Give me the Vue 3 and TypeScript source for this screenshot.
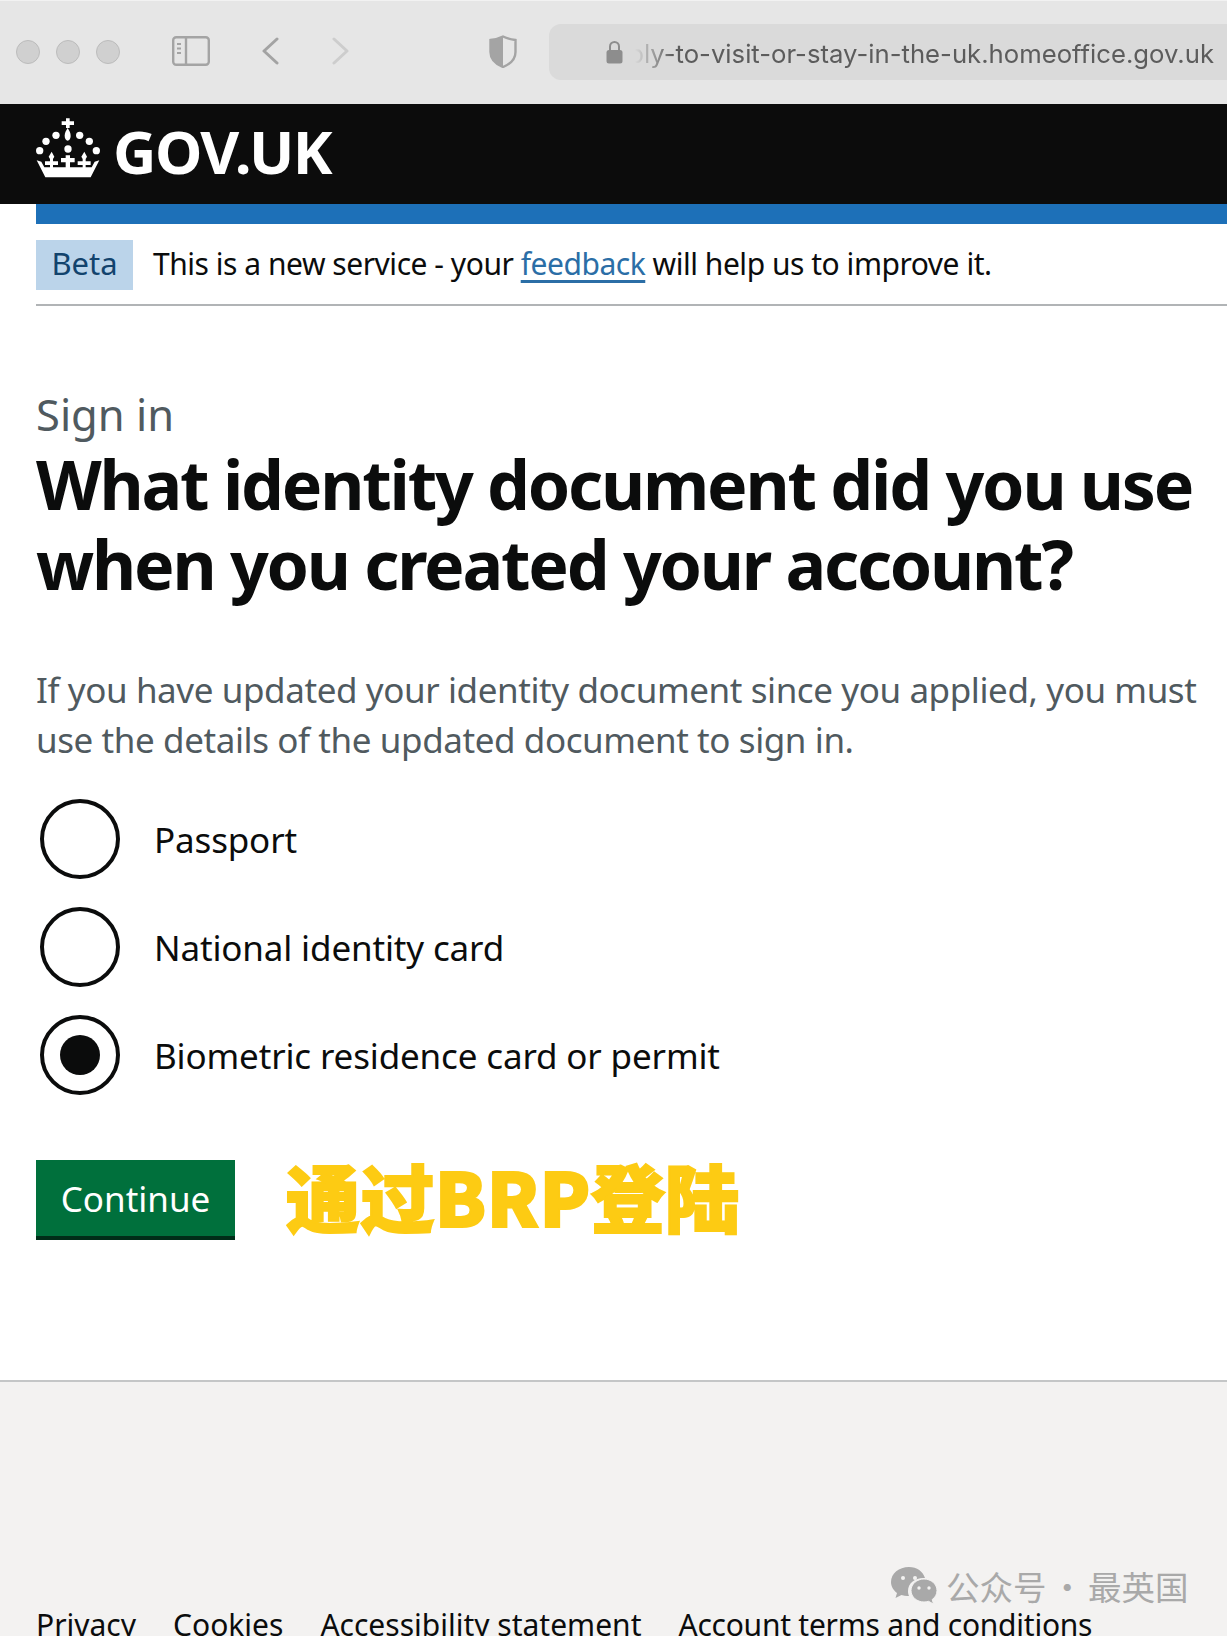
<script setup lang="ts">
const radios = [
  { label: 'Passport', checked: false },
  { label: 'National identity card', checked: false },
  { label: 'Biometric residence card or permit', checked: true },
]
const links = ['Privacy', 'Cookies', 'Accessibility statement', 'Account terms and conditions']
</script>

<template>
  <div class="page">
    <div class="toolbar">
      <div class="dots"><span class="dot"></span><span class="dot"></span><span class="dot"></span></div>
      <svg class="sidebar" width="38" height="30" viewBox="0 0 38 30">
        <rect x="1.2" y="1.2" width="35.6" height="27.6" rx="3" fill="none" stroke="#a4a4a4" stroke-width="2.4" />
        <path d="M14 1v28" stroke="#a4a4a4" stroke-width="2.4" />
        <path d="M5 8h4M5 12.500h4M5 17h4" stroke="#a4a4a4" stroke-width="1.800" />
      </svg>
      <svg class="back" width="18" height="28" viewBox="0 0 18 28"><path d="M16 2 3 14l13 12" fill="none" stroke="#a3a3a3" stroke-width="3" stroke-linecap="round" stroke-linejoin="round" /></svg>
      <svg class="forward" width="18" height="28" viewBox="0 0 18 28"><path d="M2 2l13 12L2 26" fill="none" stroke="#cdcdcd" stroke-width="3" stroke-linecap="round" stroke-linejoin="round" /></svg>
      <svg class="shield" width="28" height="33" viewBox="0 0 28 33">
        <path d="M14 1.500C10 3.500 6 4.500 1.500 5v12c0 7 5 12 12.500 15 7.500-3 12.500-8 12.500-15V5C22 4.500 18 3.500 14 1.500Z" fill="none" stroke="#a4a4a4" stroke-width="2.400" />
        <path d="M14 1.500C10 3.500 6 4.500 1.500 5v12c0 7 5 12 12.500 15Z" fill="#a4a4a4" />
      </svg>
      <div class="urlbar">
        <svg class="lock" width="17" height="24" viewBox="0 0 17 24">
          <path d="M4 11V6.500a4.500 4.500 0 0 1 9 0V11" fill="none" stroke="#8d8d8d" stroke-width="2" />
          <rect x="0.500" y="10" width="16" height="13.500" rx="2.500" fill="#8d8d8d" />
        </svg>
        <div class="url"><span>apply-to-visit-or-stay-in-the-uk.homeoffice.gov.uk</span></div>
      </div>
    </div>

    <header class="govhead">
      <svg class="crown" width="64" height="60" viewBox="48 54 192 180" fill="#fff">
        <path d="M138 55h11v9h13v11h-13v9h-11v-9h-13V64h13Z" />
        <path d="M143 84c5 8 9 15 9 24 0 8-4 14-9 14s-9-6-9-14c0-9 4-16 9-24Z" />
        <circle cx="108" cy="106" r="11" /><circle cx="179" cy="106" r="11" />
        <circle cx="78" cy="124" r="11" /><circle cx="208" cy="124" r="11" />
        <circle cx="59" cy="152" r="11" /><circle cx="229" cy="152" r="11" />
        <circle cx="144" cy="147" r="11" />
        <path d="M50 181l14 4 9 17h142l9-17 14-4-26 51H76Z" />
        <path d="M95 155l8 15-4 7v7h15v11H99v10H90V195H75v-11h15v-7l-4-7Z" />
        <path d="M193 155l8 15-4 7v7h15v11h-15v10h-9V195h-15v-11h15v-7l-4-7Z" />
        <path d="M137 166h13v8h14v13h-14v20h-13v-20h-14v-13h14Z" />
      </svg>
      <span class="wordmark">GOV.UK</span>
    </header>

    <div class="content">
      <div class="bluebar"></div>
      <div class="phase">
        <strong class="tag">Beta</strong>
        <span class="phase-text">This is a new service - your <a class="fb">feedback</a> will help us to improve it.</span>
      </div>

      <main class="main">
        <div class="caption">Sign in</div>
        <h1 class="title">What identity document did you use when you created your account?</h1>
        <p class="hint">If you have updated your identity document since you applied, you must use the details of the updated document to sign in.</p>
        <div class="radios">
          <div v-for="r in radios" :key="r.label" class="radio">
            <span class="circle"><span v-if="r.checked" class="inner"></span></span>
            <span class="label">{{ r.label }}</span>
          </div>
        </div>
        <div class="actions">
          <div class="btn">Continue</div>
          <div class="note">通过BRP登陆</div>
        </div>
      </main>
    </div>

    <footer class="footer">
      <div class="links"><a v-for="l in links" :key="l" class="flink">{{ l }}</a></div>
      <div class="mark">
        <svg width="46" height="38" viewBox="0 0 46 38" fill="#a9a9a9">
          <path d="M18 0C8 0 0 6.500 0 15c0 4.500 2.500 8.500 6 11l-1.500 5 6-3c2 .6 4 1 6 1h1.500c-.7-1.700-1-3-1-5 0-8 7.500-13 15-13h2C32 4.500 26 0 18 0Z" />
          <path d="M33 12c-7 0-13 5-13 11.500S26 35 33 35c1.500 0 3-.2 4.500-.7l5 2.700-1.300-4.500c2.900-2 4.800-5 4.800-9C46 17 40 12 33 12Z" stroke="#f3f2f1" stroke-width="1" />
          <g fill="#f3f2f1"><circle cx="12" cy="11" r="2" /><circle cx="24" cy="11" r="2" /><circle cx="28" cy="21" r="1.700" /><circle cx="38" cy="21" r="1.700" /></g>
        </svg>
        <span class="marktext">公众号 · 最英国</span>
      </div>
    </footer>
  </div>
</template>

<style scoped>
.page {
  width: 1227px;
  height: 1636px;
  overflow: hidden;
  display: flex;
  flex-direction: column;
  background: #fff;
  font-family: "Noto Sans", "Noto Sans CJK SC", sans-serif;
  color: #0b0c0c;
}
.toolbar {
  height: 104px;
  flex: none;
  box-sizing: border-box;
  background: #e6e6e6;
  border-top: 1px solid #f2f2f2;
  display: flex;
  align-items: flex-start;
  padding-top: 23px;
  padding-left: 16px;
}
.dots { display: flex; gap: 16px; margin-top: 16px; }
.dot {
  width: 24px; height: 24px; border-radius: 50%;
  background: #d0d0d0; box-sizing: border-box; border: 1px solid #bcbcbc;
}
.sidebar { margin-left: 52px; margin-top: 12px; }
.back { margin-left: 51px; margin-top: 13px; }
.forward { margin-left: 53px; margin-top: 13px; }
.shield { margin-left: 139px; margin-top: 11px; }
.urlbar {
  margin-left: 32px;
  flex: 1;
  height: 56px;
  background: #dadada;
  border-radius: 12px 0 0 12px;
  display: flex;
  align-items: center;
  padding-left: 57px;
  padding-right: 13px;
  min-width: 0;
}
.lock { flex: none; }
.url {
  flex: 1;
  min-width: 0;
  margin-left: 12px;
  padding-top: 3px;
  overflow: hidden;
  display: flex;
  justify-content: flex-end;
  white-space: nowrap;
  font-family: Inter, sans-serif;
  font-size: 25.700px;
  color: #5c5c5c;
  -webkit-mask-image: linear-gradient(90deg, transparent 0, #000 38px);
  mask-image: linear-gradient(90deg, transparent 0, #000 38px);
}
.url span { flex: none; }
.govhead {
  height: 100px;
  flex: none;
  background: #0c0c0c;
  display: flex;
  align-items: center;
  padding-left: 36px;
  gap: 13px;
}
.crown { margin-top: -12px; }
.wordmark {
  font-family: "Noto Sans", sans-serif;
  font-weight: 700;
  font-size: 60px;
  letter-spacing: -1.500px;
  color: #fff;
  line-height: 1;
  margin-top: -6px;
}
.content { flex: 1; padding-left: 36px; display: flex; flex-direction: column; }
.bluebar { height: 20px; background: #1d70b8; flex: none; }
.phase {
  display: flex;
  align-items: center;
  box-sizing: border-box;
  border-bottom: 2px solid #b1b4b6;
  padding: 16px 0 14px;
  flex: none;
}
.tag {
  width: 97px;
  height: 50px;
  background: #bbd4ea;
  color: #12436d;
  font-weight: 400;
  font-size: 31px;
  padding-bottom: 4px;
  box-sizing: border-box;
  display: flex;
  align-items: center;
  justify-content: center;
}
.phase-text { margin-left: 20px; margin-bottom: 4px; font-size: 30px; letter-spacing: -0.470px; white-space: nowrap; }
.fb { color: #2b6ea6; text-decoration: underline; text-underline-offset: 5px; }
.main { padding-top: 80px; }
.caption { font-size: 43.500px; line-height: 56px; color: #505a5f; }
.title {
  margin: 2px 0 0;
  font-size: 68px;
  line-height: 80px;
  font-weight: 700;
  letter-spacing: -2.200px;
  width: 1185px;
}
.hint {
  margin: 61px 0 0;
  font-size: 35px;
  line-height: 50px;
  letter-spacing: -0.410px;
  color: #505a5f;
  width: 1185px;
}
.radios { margin-top: 35px; display: flex; flex-direction: column; gap: 30px; }
.radio { display: flex; align-items: center; height: 78px; padding-left: 4px; }
.circle {
  width: 80px; height: 80px; box-sizing: border-box;
  border: 4px solid #0b0c0c; border-radius: 50%;
  display: flex; align-items: center; justify-content: center; flex: none;
}
.inner { width: 40px; height: 40px; border-radius: 50%; background: #0b0c0c; }
.label { margin-left: 34px; font-size: 35px; letter-spacing: -0.150px; }
.actions { margin-top: 66px; display: flex; align-items: flex-start; }
.btn {
  width: 199px;
  height: 76px;
  background: #00703c;
  box-shadow: 0 4px 0 #002d18;
  color: #fff;
  font-size: 35px;
  display: flex;
  align-items: center;
  justify-content: center;
}
.note {
  margin: -3px 0 0 51px;
  font-family: "Noto Sans CJK SC", sans-serif;
  font-weight: 900;
  font-size: 74px;
  line-height: 76px;
  letter-spacing: 0.400px;
  color: #fdcb13;
  -webkit-text-stroke: 2px #fdcb13;
  white-space: nowrap;
}
.footer {
  height: 256px;
  flex: none;
  box-sizing: border-box;
  background: #f3f2f1;
  border-top: 2px solid #c4c6c7;
  padding-left: 36px;
  position: relative;
  display: flex;
  align-items: flex-start;
}
.links { display: flex; gap: 37px; margin-top: 222px; font-size: 30px; line-height: 42px; white-space: nowrap; }
.flink:last-child { letter-spacing: -0.250px; }
.mark {
  position: absolute;
  left: 891px;
  top: 179px;
  display: flex;
  align-items: center;
  gap: 9px;
}
.marktext { font-family: "Noto Sans CJK SC", sans-serif; font-size: 33.500px; word-spacing: -3.500px; color: #a9a9a9; white-space: nowrap; }
</style>

<style>
html, body { margin: 0; overflow: hidden; }
</style>
